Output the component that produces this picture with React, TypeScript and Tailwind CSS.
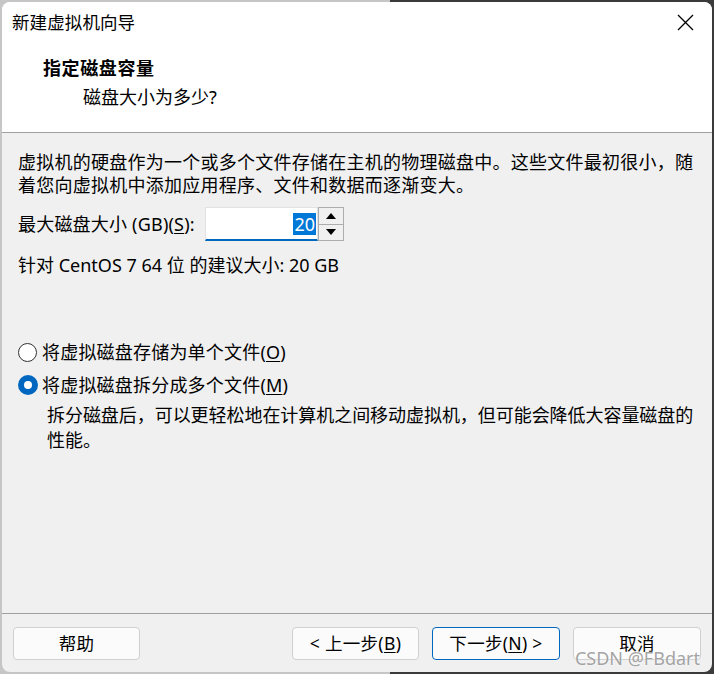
import React from "react";

const font = { fontFamily: '"Noto Sans", "Noto Sans CJK SC", sans-serif' };

export default function App() {
  return (
    <div
      className="flex h-[674px] w-[714px] bg-[linear-gradient(to_right,#c6c6c6_0,#c6c6c6_390px,#3b3b3b_390px)] pt-[2px] pl-[2px]"
      style={font}
    >
      <div className="relative flex h-[670px] w-[710px] flex-col overflow-hidden rounded-lg bg-[#f0f0f0] text-[18px] leading-[23px] text-black">
        <header className="h-[131px] border-b border-[#a0a0a0] bg-white">
          <div className="flex h-[40px] items-center justify-between pl-[10px] pr-[18px]">
            <span className="text-[17.5px] tracking-[0.1px]">新建虚拟机向导</span>
            <svg width="17" height="17" viewBox="0 0 17 17" className="text-black">
              <path d="M1 1 L16 16 M16 1 L1 16" stroke="currentColor" strokeWidth="1.3" fill="none" />
            </svg>
          </div>
          <p className="mt-[14px] pl-[41px] text-[18px] leading-[24px] font-bold tracking-[0.6px]">指定磁盘容量</p>
          <p className="mt-[5px] pl-[81px] leading-[24px]">磁盘大小为多少?</p>
        </header>

        <main className="flex flex-1 flex-col pl-[16px] pt-[18px]">
          <p className="tracking-[0.25px] whitespace-nowrap">
            虚拟机的硬盘作为一个或多个文件存储在主机的物理磁盘中。这些文件最初很小，随
            <br />
            着您向虚拟机中添加应用程序、文件和数据而逐渐变大。
          </p>

          <div className="mt-[10px] flex h-[34px] items-center">
            <span className="w-[187px] tracking-[0.2px]">
              最大磁盘大小 (GB)(<span className="underline underline-offset-2">S</span>):
            </span>
            <div className="flex h-[34px] w-[113px] items-center justify-end border border-[#e2e2e2] border-b-2 border-b-[#0067c0] bg-white pr-[1px]">
              <span className="bg-[#0078d7] px-[1px] leading-[22px] text-white">20</span>
            </div>
            <div className="flex h-[34px] w-[26px] flex-col border border-[#adadad] bg-[#e1e1e1]">
              <div className="flex flex-1 items-center justify-center border-b border-[#adadad] bg-[#f0f0f0]">
                <svg width="10" height="6" viewBox="0 0 10 6">
                  <path d="M5 0 L10 6 L0 6 Z" fill="#000" />
                </svg>
              </div>
              <div className="flex flex-1 items-center justify-center bg-[#f0f0f0]">
                <svg width="10" height="6" viewBox="0 0 10 6">
                  <path d="M0 0 L10 0 L5 6 Z" fill="#000" />
                </svg>
              </div>
            </div>
          </div>

          <p className="mt-[13px]">针对 CentOS 7 64 位 的建议大小: 20 GB</p>

          <div className="mt-[62px] flex h-[26px] items-center gap-[5px]">
            <span className="h-[19px] w-[19px] rounded-full border border-[#333] bg-white" />
            <span className="tracking-[0.2px]">
              将虚拟磁盘存储为单个文件(<span className="underline underline-offset-2">O</span>)
            </span>
          </div>
          <div className="mt-[7px] flex h-[26px] items-center gap-[4px]">
            <span className="flex h-[20px] w-[20px] items-center justify-center rounded-full bg-[#0067c0]">
              <span className="h-[8px] w-[8px] rounded-full bg-white" />
            </span>
            <span className="tracking-[0.2px]">
              将虚拟磁盘拆分成多个文件(<span className="underline underline-offset-2">M</span>)
            </span>
          </div>
          <p className="mt-[5px] pl-[29px] leading-[25px] tracking-[-0.05px] whitespace-nowrap">
            拆分磁盘后，可以更轻松地在计算机之间移动虚拟机，但可能会降低大容量磁盘的
            <br />
            性能。
          </p>
        </main>

        <footer className="flex h-[59px] items-start border-t border-[#a0a0a0] px-[11px] pt-[13px]">
          <Button label="帮助" className="w-[127px]" />
          <div className="ml-auto flex gap-[13px]">
            <Button
              className="w-[127px]"
              label={
                <>
                  &lt; 上一步(<span className="underline underline-offset-2">B</span>)
                </>
              }
            />
            <Button
              primary
              className="w-[128px]"
              label={
                <>
                  下一步(<span className="underline underline-offset-2">N</span>) &gt;
                </>
              }
            />
            <Button label="取消" className="w-[128px]" />
          </div>
        </footer>

        <span className="absolute right-[12px] bottom-[4px] text-[18px] leading-[20px] text-[#8c8c8c]/80 [text-shadow:0_0_2px_#fff]">
          CSDN @FBdart
        </span>
      </div>
    </div>
  );
}

function Button({
  label,
  className,
  primary,
}: {
  label: React.ReactNode;
  className?: string;
  primary?: boolean;
}) {
  return (
    <div
      className={`flex h-[33px] items-center justify-center rounded-[4px] border bg-[#fbfbfb] text-[17.5px] tracking-[0.3px] ${
        primary ? "border-[#0067c0]" : "border-[#d0d0d0]"
      } ${className ?? ""}`}
    >
      {label}
    </div>
  );
}
